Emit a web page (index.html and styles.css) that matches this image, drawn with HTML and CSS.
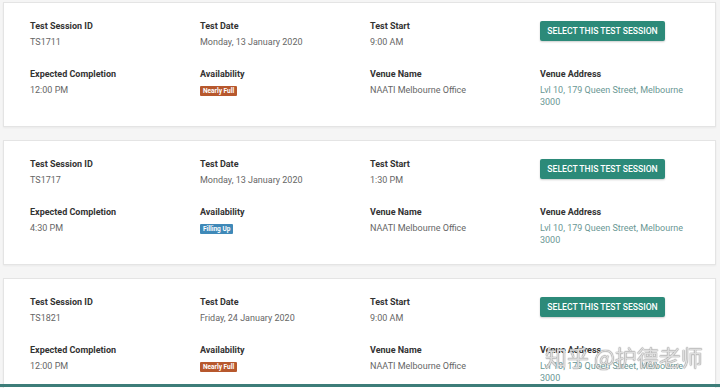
FILE: index.html
```html
<!DOCTYPE html>
<html lang="en">
<head>
  <meta charset="UTF-8" />
  <meta name="viewport" content="width=device-width, initial-scale=1.0"/>
  <title>Test Sessions</title>
  <link rel="icon" href="data:,">
  <link rel="stylesheet" href="styles.css">
</head>
<body>
  <div class="sessions">
    <div class="card">
      <div class="field">
        <div class="label">Test Session ID</div>
        <div class="value">TS1711</div>
      </div>
      <div class="field">
        <div class="label">Test Date</div>
        <div class="value">Monday, 13 January 2020</div>
      </div>
      <div class="field">
        <div class="label">Test Start</div>
        <div class="value">9:00 AM</div>
      </div>
      <div class="field">
        <button class="select-btn">Select this test session</button>
      </div>
      <div class="field">
        <div class="label">Expected Completion</div>
        <div class="value">12:00 PM</div>
      </div>
      <div class="field">
        <div class="label">Availability</div>
        <div class="value"><span class="badge badge-full">Nearly Full</span></div>
      </div>
      <div class="field">
        <div class="label">Venue Name</div>
        <div class="value">NAATI Melbourne Office</div>
      </div>
      <div class="field">
        <div class="label">Venue Address</div>
        <div class="value address">Lvl 10, 179 Queen Street, Melbourne 3000</div>
      </div>
    </div>

    <div class="card">
      <div class="field">
        <div class="label">Test Session ID</div>
        <div class="value">TS1717</div>
      </div>
      <div class="field">
        <div class="label">Test Date</div>
        <div class="value">Monday, 13 January 2020</div>
      </div>
      <div class="field">
        <div class="label">Test Start</div>
        <div class="value">1:30 PM</div>
      </div>
      <div class="field">
        <button class="select-btn">Select this test session</button>
      </div>
      <div class="field">
        <div class="label">Expected Completion</div>
        <div class="value">4:30 PM</div>
      </div>
      <div class="field">
        <div class="label">Availability</div>
        <div class="value"><span class="badge badge-filling">Filling Up</span></div>
      </div>
      <div class="field">
        <div class="label">Venue Name</div>
        <div class="value">NAATI Melbourne Office</div>
      </div>
      <div class="field">
        <div class="label">Venue Address</div>
        <div class="value address">Lvl 10, 179 Queen Street, Melbourne 3000</div>
      </div>
    </div>

    <div class="card">
      <div class="field">
        <div class="label">Test Session ID</div>
        <div class="value">TS1821</div>
      </div>
      <div class="field">
        <div class="label">Test Date</div>
        <div class="value">Friday, 24 January 2020</div>
      </div>
      <div class="field">
        <div class="label">Test Start</div>
        <div class="value">9:00 AM</div>
      </div>
      <div class="field">
        <button class="select-btn">Select this test session</button>
      </div>
      <div class="field">
        <div class="label">Expected Completion</div>
        <div class="value">12:00 PM</div>
      </div>
      <div class="field">
        <div class="label">Availability</div>
        <div class="value"><span class="badge badge-full">Nearly Full</span></div>
      </div>
      <div class="field">
        <div class="label">Venue Name</div>
        <div class="value">NAATI Melbourne Office</div>
      </div>
      <div class="field">
        <div class="label">Venue Address</div>
        <div class="value address">Lvl 10, 179 Queen Street, Melbourne 3000</div>
      </div>
    </div>
  </div>

  <div class="footer-line"></div>
  <div class="watermark">知乎 @护德老师</div>
</body>
</html>
```

FILE: styles.css
```css
:root {
  --bg: #f5f5f5;
  --white: #ffffff;
  --border: #e4e4e4;
  --label: #333333;
  --value: #666666;
  --link: #6a9794;
  --teal: #2c8a79;
  --full: #b7582d;
  --filling: #3f89b8;
}

* {
  box-sizing: border-box;
}

body {
  margin: 0;
  padding: 2px 4px 0 3px;
  background-color: var(--bg);
  font-family: Roboto, 'Liberation Sans', sans-serif;
  color: var(--label);
  overflow: hidden;
}

.card {
  display: grid;
  grid-template-columns: repeat(4, 170px);
  row-gap: 20px;
  background-color: var(--white);
  border: 1px solid var(--border);
  box-shadow: 0 1px 2px rgba(0, 0, 0, 0.05);
  padding: 17px 0 18px 26px;
  margin-bottom: 13px;
}

.label {
  font-size: 9px;
  font-weight: 700;
  line-height: 12px;
  margin-bottom: 4px;
  color: var(--label);
}

.value {
  font-size: 9px;
  line-height: 12px;
  color: var(--value);
}

.address {
  color: var(--link);
  width: 145px;
}

.badge {
  display: inline-block;
  font-size: 6.5px;
  font-weight: 700;
  line-height: 10px;
  color: var(--white);
  padding: 0 3px;
  border-radius: 1px;
  vertical-align: middle;
}

.badge-full {
  background-color: var(--full);
}

.badge-filling {
  background-color: var(--filling);
}

.select-btn {
  display: block;
  width: 125px;
  height: 20px;
  margin-top: 1px;
  padding: 0;
  border: none;
  border-radius: 2px;
  background-color: var(--teal);
  color: var(--white);
  font-family: Roboto, 'Liberation Sans', sans-serif;
  font-size: 8.6px;
  font-weight: 500;
  text-transform: uppercase;
  box-shadow: 0 1px 2px rgba(0, 0, 0, 0.2);
  cursor: pointer;
}

.footer-line {
  position: fixed;
  left: 0;
  right: 0;
  bottom: 1px;
  height: 3px;
  background-color: #3d7d79;
}

.watermark {
  position: fixed;
  left: 545px;
  top: 340px;
  font-family: 'Noto Sans CJK SC', sans-serif;
  font-size: 22px;
  color: rgba(255, 255, 255, 0.75);
  text-shadow: 0 0 1px #777, 0 0 1px #777;
  pointer-events: none;
}
```
